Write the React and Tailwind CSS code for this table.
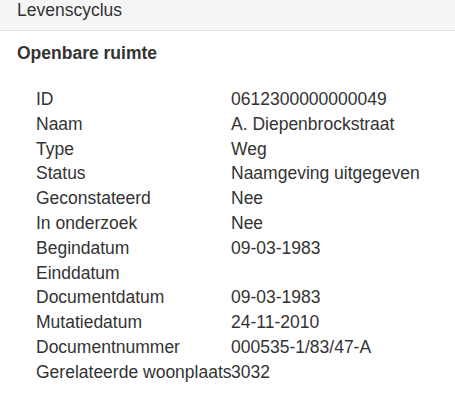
const rows = [
  ["ID", "0612300000000049"],
  ["Naam", "A. Diepenbrockstraat"],
  ["Type", "Weg"],
  ["Status", "Naamgeving uitgegeven"],
  ["Geconstateerd", "Nee"],
  ["In onderzoek", "Nee"],
  ["Begindatum", "09-03-1983"],
  ["Einddatum", ""],
  ["Documentdatum", "09-03-1983"],
  ["Mutatiedatum", "24-11-2010"],
  ["Documentnummer", "000535-1/83/47-A"],
  ["Gerelateerde woonplaats", "3032"],
];

export default function App() {
  return (
    <div
      className="w-[455px] h-[395px] bg-white text-[#333] overflow-hidden"
      style={{ fontFamily: '"Liberation Sans", Arial, sans-serif' }}
    >
      {/* header */}
      <div className="h-[31px] bg-[#f5f5f5] border-b border-[#e3e3e3] px-[17px] text-[17.5px] leading-5">
        Levenscyclus
      </div>

      <div className="px-[17px] pt-[12px]">
        <h3 className="text-[17.5px] leading-5 font-bold">Openbare ruimte</h3>

        <div className="mt-[24px] pl-[19px] text-[17.5px] leading-[24.8px]">
          {rows.map(([label, value]) => (
            <div key={label} className="flex">
              <div className="w-[195px] shrink-0 whitespace-nowrap">{label}</div>
              <div>{value}</div>
            </div>
          ))}
        </div>
      </div>
    </div>
  );
}
